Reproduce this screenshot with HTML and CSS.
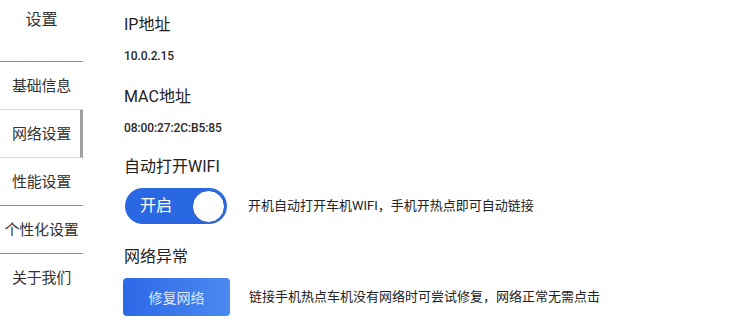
FILE: index.html
```html
<!DOCTYPE html>
<html lang="zh-CN">
<head>
<meta charset="utf-8">
<title>设置</title>
<link rel="stylesheet" href="styles.css">
</head>
<body>
<div class="app">
  <nav class="sidebar">
    <div class="side-head">设置</div>
    <div class="side-item before-active">基础信息</div>
    <div class="side-item active">网络设置</div>
    <div class="side-item">性能设置</div>
    <div class="side-item">个性化设置</div>
    <div class="side-item">关于我们</div>
  </nav>
  <main class="content">
    <div class="title">IP地址</div>
    <div class="value">10.0.2.15</div>
    <div class="title gap-l">MAC地址</div>
    <div class="value">08:00:27:2C:B5:85</div>
    <div class="title gap-m">自动打开WIFI</div>
    <div class="row row-toggle">
      <div class="toggle">
        <span class="toggle-label">开启</span>
        <span class="knob"></span>
      </div>
      <span class="desc">开机自动打开车机WIFI，手机开热点即可自动链接</span>
    </div>
    <div class="title gap-x">网络异常</div>
    <div class="row row-btn">
      <button class="btn">修复网络</button>
      <span class="desc">链接手机热点车机没有网络时可尝试修复，网络正常无需点击</span>
    </div>
  </main>
</div>
</body>
</html>
```

FILE: styles.css
```css
* { box-sizing: border-box; }
html, body { margin: 0; padding: 0; background: #ffffff; }
body {
  font-family: Roboto, "Noto Sans CJK SC", "Noto Sans", sans-serif;
  color: #222;
  width: 747px;
  height: 324px;
  overflow: hidden;
}
.app { display: flex; height: 324px; }

.sidebar { width: 83px; flex: none; display: flex; flex-direction: column; }
.side-head {
  height: 62px;
  border-bottom: 1px solid #8c8c8c;
  font-size: 16px;
  line-height: 40px;
  text-align: center;
  color: #333;
}
.side-item {
  height: 48px;
  font-size: 15px;
  line-height: 48px;
  text-align: center;
  color: #333;
  border-bottom: 1px solid #8c8c8c;
  white-space: nowrap;
  letter-spacing: -0.2px;
}
.side-item.before-active { border-bottom-color: #dcdcdc; }
.side-item.active {
  border-bottom: 1px solid #dcdcdc;
  border-right: 3px solid #a0a0a0;
  padding-left: 3px;
}
.side-item:last-child { border-bottom: none; }

.content { flex: 1; padding: 13px 0 0 41px; display: flex; flex-direction: column; }
.title { font-size: 16px; line-height: 24px; color: #222; }
.value { font-size: 12px; line-height: 18px; margin-top: 10px; color: #2a2a2a; font-weight: 500; letter-spacing: -0.1px; }
.gap-l { margin-top: 20px; }
.gap-m { margin-top: 18px; }
.gap-x { margin-top: 21px; }

.row { display: flex; align-items: center; gap: 21px; }
.row-toggle { margin-top: 9px; margin-left: 1px; }
.row-btn { margin-top: 9px; margin-left: -1px; gap: 19px; }

.toggle {
  width: 102px;
  height: 36px;
  border-radius: 18px;
  background: #2a68e3;
  display: flex;
  align-items: center;
  justify-content: space-between;
  padding: 0 2px 0 15px;
}
.toggle-label { color: #fff; font-size: 16px; line-height: 20px; }
.knob {
  width: 33px;
  height: 33px;
  border-radius: 50%;
  background: #fff;
  border: 1px solid #1f55c4;
}
.desc { font-size: 13px; line-height: 18px; color: #222; white-space: nowrap; }

.btn {
  width: 107px;
  height: 38px;
  border: none;
  border-radius: 4px;
  background: linear-gradient(90deg, #2d69e6 0%, #4a89f0 100%);
  color: #dde7fb;
  font-family: Roboto, "Noto Sans CJK SC", sans-serif;
  font-size: 14px;
  padding: 0;
}
```
